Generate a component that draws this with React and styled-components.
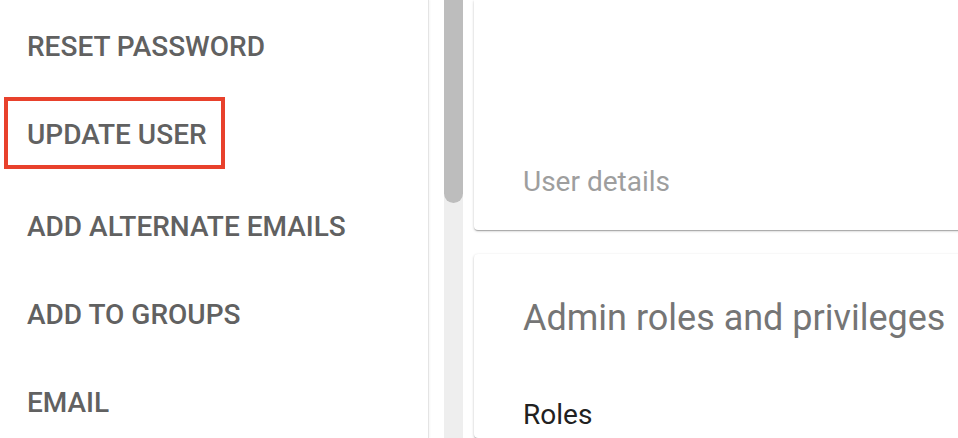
import React from "react";
import styled, { createGlobalStyle } from "styled-components";

const GlobalStyle = createGlobalStyle`
  html, body {
    margin: 0;
    padding: 0;
    background: #ffffff;
    font-family: Roboto, "Noto Sans", Arial, sans-serif;
  }
`;

const Page = styled.div`
  display: flex;
  width: 958px;
  height: 438px;
  overflow: hidden;
  background: #ffffff;
`;

const Nav = styled.nav`
  flex: 0 0 429px;
  height: 100%;
  padding-top: 3px;
  box-sizing: border-box;
  border-right: 1px solid #e4e4e4;
  box-shadow: 1px 0 2px rgba(0, 0, 0, 0.04);
`;

const NavItem = styled.div`
  position: relative;
  height: 88px;
  line-height: 88px;
  padding-left: 27px;
  font-size: 28px;
  font-weight: 500;
  color: #616161;
  white-space: nowrap;

  ${({ $highlighted }) =>
    $highlighted &&
    `
    padding-bottom: 4px;

    &::after {
      content: "";
      position: absolute;
      left: 4px;
      top: 6px;
      width: 221px;
      height: 72px;
      box-sizing: border-box;
      border: 4px solid #e8412c;
    }
  `}
`;

const ScrollTrack = styled.div`
  flex: 0 0 19px;
  height: 100%;
  margin-left: 15px;
  margin-right: 11px;
  background: #eeeeee;
`;

const ScrollThumb = styled.div`
  height: 203px;
  background: #bdbdbd;
  border-radius: 0 0 10px 10px;
`;

const Main = styled.main`
  flex: 0 0 640px;
  display: flex;
  flex-direction: column;
  gap: 24px;
`;

const Card = styled.section`
  box-sizing: border-box;
  background: #ffffff;
  border-radius: ${({ $top }) => ($top ? "0 0 4px 4px" : "4px")};
  box-shadow: 0 1px 3px rgba(0, 0, 0, 0.2), 0 1px 1px rgba(0, 0, 0, 0.14),
    0 2px 1px -1px rgba(0, 0, 0, 0.12);
  padding-left: 49px;
`;

const DetailsCard = styled(Card)`
  height: 230px;
  display: flex;
  flex-direction: column;
  justify-content: flex-end;
  padding-bottom: 32px;
`;

const RolesCard = styled(Card)`
  flex: 1;
  padding-top: 42px;
`;

const Caption = styled.div`
  font-size: 28px;
  line-height: 32px;
  color: #9e9e9e;
`;

const CardTitle = styled.h2`
  margin: 0 0 59px;
  font-size: 36px;
  line-height: 44px;
  font-weight: 400;
  color: #757575;
  white-space: nowrap;
`;

const FieldLabel = styled.div`
  font-size: 28px;
  line-height: 32px;
  color: #212121;
`;

const navItems = [
  "RESET PASSWORD",
  "UPDATE USER",
  "ADD ALTERNATE EMAILS",
  "ADD TO GROUPS",
  "EMAIL",
];

export default function App() {
  return (
    <>
      <GlobalStyle />
      <Page>
        <Nav>
          {navItems.map((item) => (
            <NavItem key={item} $highlighted={item === "UPDATE USER"}>
              {item}
            </NavItem>
          ))}
        </Nav>
        <ScrollTrack>
          <ScrollThumb />
        </ScrollTrack>
        <Main>
          <DetailsCard $top>
            <Caption>User details</Caption>
          </DetailsCard>
          <RolesCard>
            <CardTitle>Admin roles and privileges</CardTitle>
            <FieldLabel>Roles</FieldLabel>
          </RolesCard>
        </Main>
      </Page>
    </>
  );
}
